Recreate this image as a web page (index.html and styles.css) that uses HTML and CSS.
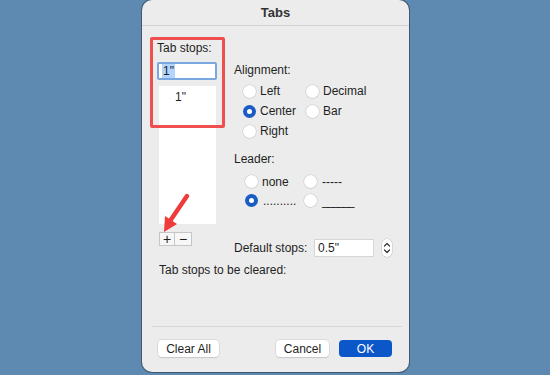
FILE: index.html
```html
<!DOCTYPE html>
<html lang="en">
<head>
    <meta charset="UTF-8">
    <meta name="viewport" content="width=device-width, initial-scale=1.0">
    <title>Tabs</title>
    <link rel="stylesheet" href="styles.css">
</head>
<body>
    <div class="dialog">
        <div class="titlebar">Tabs</div>

        <div class="content">
            <div class="stops-col">
                <div class="col-label">Tab stops:</div>
                <div class="stop-input"><span class="selected">1"</span></div>
                <div class="stop-list">
                    <div class="stop-item">1"</div>
                </div>
                <div class="add-remove">
                    <span class="ar-btn">+</span>
                    <span class="ar-btn">&minus;</span>
                </div>
            </div>

            <div class="options-col">
                <div class="col-label">Alignment:</div>
                <div class="radio-grid align-grid">
                    <div class="radio-row"><span class="radio"></span>Left</div>
                    <div class="radio-row"><span class="radio"></span>Decimal</div>
                    <div class="radio-row"><span class="radio checked"></span>Center</div>
                    <div class="radio-row"><span class="radio"></span>Bar</div>
                    <div class="radio-row"><span class="radio"></span>Right</div>
                </div>

                <div class="col-label leader-label">Leader:</div>
                <div class="radio-grid leader-grid">
                    <div class="radio-row"><span class="radio"></span>none</div>
                    <div class="radio-row"><span class="radio"></span><span class="leader-sample">-----</span></div>
                    <div class="radio-row"><span class="radio checked"></span><span class="leader-sample">..........</span></div>
                    <div class="radio-row"><span class="radio"></span><span class="leader-sample underline">______</span></div>
                </div>

                <div class="default-row">
                    <span class="default-label">Default stops:</span>
                    <span class="default-input">0.5"</span>
                    <span class="stepper">
                        <svg width="10" height="18" viewBox="0 0 10 18">
                            <path d="M2.5 7 L5 4.5 L7.5 7" fill="none" stroke="#333" stroke-width="1.2" stroke-linecap="round" stroke-linejoin="round"/>
                            <path d="M2.5 11 L5 13.5 L7.5 11" fill="none" stroke="#333" stroke-width="1.2" stroke-linecap="round" stroke-linejoin="round"/>
                        </svg>
                    </span>
                </div>
            </div>
        </div>

        <div class="cleared-label">Tab stops to be cleared:</div>

        <div class="spacer"></div>

        <div class="footer">
            <button class="btn">Clear All</button>
            <div class="footer-right">
                <button class="btn btn-cancel">Cancel</button>
                <button class="btn btn-ok">OK</button>
            </div>
        </div>

        <!-- annotation overlays -->
        <div class="highlight-box"></div>
        <svg class="arrow" width="34" height="44" viewBox="0 0 34 44">
            <line x1="29" y1="4" x2="12" y2="29" stroke="#ee3b3b" stroke-width="4.5" stroke-linecap="round"/>
            <polygon points="6,40 19,32 7,24" fill="#ee3b3b"/>
        </svg>
    </div>
</body>
</html>
```

FILE: styles.css
```css
body {
    margin: 0;
    height: 375px;
    background-color: #5e8ab2;
    font-family: "Liberation Sans", Arial, sans-serif;
    font-size: 12px;
    color: #1f1f1f;
    display: flex;
    justify-content: center;
    overflow: hidden;
}

.dialog {
    position: relative;
    width: 267px;
    height: 372px;
    margin-left: 1px;
    background-color: #ececec;
    border-radius: 10px;
    box-shadow: 0 0 0 1px rgba(30, 30, 30, 0.45);
    display: flex;
    flex-direction: column;
}

.titlebar {
    height: 25px;
    line-height: 25px;
    border-bottom: 1px solid #d3d3d3;
    text-align: center;
    font-size: 13px;
    font-weight: bold;
    color: #333;
}

.content {
    display: flex;
    padding: 15px 0 0 15px;
}

.col-label {
    line-height: 14px;
    height: 14px;
}

.stops-col {
    width: 60px;
    display: flex;
    flex-direction: column;
}

.stop-input {
    margin-top: 7px;
    height: 14px;
    line-height: 14px;
    padding-left: 3px;
    background-color: white;
    border: 2px solid #7aa7e0;
    border-radius: 2px;
}

.selected {
    background-color: #b3d4fc;
    padding: 0 1px;
}

.stop-list {
    margin: 6px 0 0 2px;
    width: 57px;
    height: 138px;
    background-color: white;
}

.stop-item {
    padding: 4px 0 0 16px;
    line-height: 14px;
}

.add-remove {
    margin: 8px 0 0 2px;
    display: flex;
}

.ar-btn {
    width: 16px;
    height: 14px;
    line-height: 13px;
    text-align: center;
    font-size: 14px;
    background-color: #f7f7f7;
    border: 1px solid #c6c6c6;
    box-sizing: border-box;
}

.ar-btn + .ar-btn {
    border-left: none;
    width: 17px;
}

.options-col {
    margin-left: 17px;
    padding-top: 22px;
    display: flex;
    flex-direction: column;
}

.radio-grid {
    display: grid;
    padding-left: 9px;
}

.align-grid {
    margin-top: 4px;
    grid-template-columns: 63px auto;
    grid-auto-rows: 20px;
}

.leader-label {
    margin-top: 11px;
}

.leader-grid {
    margin-top: 6px;
    padding-left: 11px;
    grid-template-columns: 59px auto;
    grid-auto-rows: 19px;
}

.radio-row {
    display: flex;
    align-items: center;
    gap: 4px;
}

.radio {
    width: 13px;
    height: 13px;
    border-radius: 50%;
    background-color: white;
    box-shadow: 0 0 0 0.5px #c9c9c9, 0 0.5px 1px rgba(0, 0, 0, 0.15);
    box-sizing: border-box;
    position: relative;
}

.radio.checked {
    background-color: #1a5cc4;
    box-shadow: none;
}

.radio.checked::after {
    content: "";
    position: absolute;
    left: 4px;
    top: 4px;
    width: 5px;
    height: 5px;
    border-radius: 50%;
    background-color: white;
}

.leader-sample {
    font-size: 12px;
    margin-left: 1px;
}

.leader-sample.underline {
    letter-spacing: -1.5px;
}

.default-row {
    margin-top: 29px;
    display: flex;
    align-items: center;
    height: 18px;
}

.default-label {
    width: 80px;
}

.default-input {
    width: 55px;
    height: 16px;
    line-height: 16px;
    padding-left: 3px;
    background-color: white;
    border: 1px solid #d6d6d6;
}

.stepper {
    margin-left: 8px;
    width: 10px;
    height: 18px;
    background-color: white;
    border-radius: 5px;
    box-shadow: 0 0 0 0.5px #c4c4c4;
    display: flex;
}

.cleared-label {
    margin: 6px 0 0 17px;
    line-height: 14px;
}

.spacer {
    flex: 1;
}

.footer {
    border-top: 1px solid #d6d6d6;
    margin: 0 7px 0 10px;
    padding: 13px 10px 15px 6px;
    display: flex;
    justify-content: space-between;
}

.footer-right {
    display: flex;
    gap: 10px;
}

.btn {
    height: 17px;
    padding: 0;
    border: none;
    border-radius: 4px;
    background-color: white;
    box-shadow: 0 0 0 0.5px #c8c8c8, 0 1px 1px rgba(0, 0, 0, 0.15);
    font-family: "Liberation Sans", Arial, sans-serif;
    font-size: 12px;
    color: #1f1f1f;
    width: 61px;
}

.btn-cancel {
    width: 53px;
}

.btn-ok {
    width: 53px;
    background-color: #0b57c9;
    color: white;
    box-shadow: none;
}

.highlight-box {
    position: absolute;
    left: 8px;
    top: 37px;
    width: 69px;
    height: 85px;
    border: 3px solid #ef4f4f;
    border-radius: 2px;
}

.arrow {
    position: absolute;
    left: 16px;
    top: 192px;
}
```
